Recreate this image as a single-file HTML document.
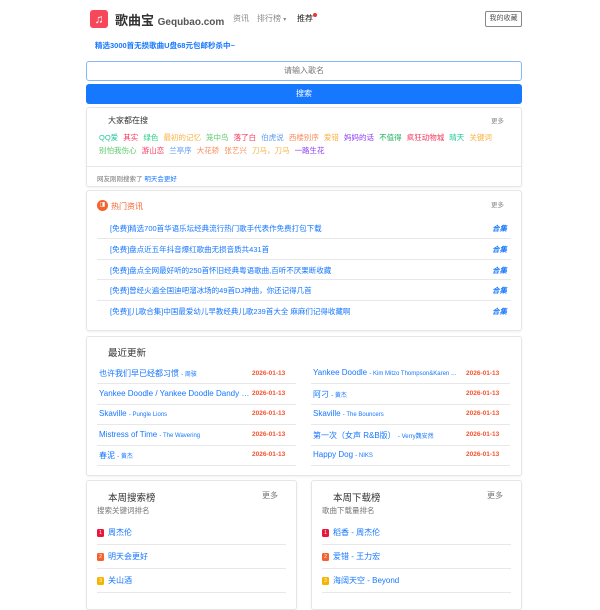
<!DOCTYPE html>
<html><head><meta charset="utf-8"><style>
*{margin:0;padding:0;box-sizing:border-box}
body{width:600px;height:600px;overflow:hidden;background:#fff;font-family:"Liberation Sans","Noto Sans CJK SC",sans-serif;position:relative}
.a{position:absolute;white-space:nowrap}
.card{position:absolute;border:1px solid #e6e6e6;border-radius:3px;background:#fff;box-shadow:0 1px 2px rgba(0,0,0,.06)}
.b{color:#1677ff}
.hr{position:absolute;height:1px;background:#e8e8e8}
.t{font-size:7.5px}
.date{color:#f5522d;font-size:6.5px;font-weight:bold}
.rk{display:inline-block;width:7px;height:8px;border-radius:1.5px;color:#fff;font-size:5px;text-align:center;line-height:8px;margin-right:4px;vertical-align:1px}
</style></head><body>
<div class="a" style="left:90px;top:10px;width:18px;height:18px;background:#f7475b;border-radius:3px;color:#fff;font-size:12px;text-align:center;line-height:18px">♫</div>
<div class="a" style="left:115px;top:10px;font-size:13px;color:#333;font-weight:bold">歌曲宝 <span style="font-size:10px;color:#555">Gequbao.com</span></div>
<div class="a" style="left:233px;top:13px;font-size:8px;color:#888">资讯</div>
<div class="a" style="left:257px;top:13px;font-size:8px;color:#888">排行榜 <span style="font-size:6px">▾</span></div>
<div class="a" style="left:297px;top:13px;font-size:8px;color:#222">推荐</div>
<div class="a" style="left:313px;top:13px;width:4px;height:4px;border-radius:50%;background:#e33"></div>
<div class="a" style="left:485px;top:11px;width:37px;height:16px;border:1px solid #888;border-radius:2px;font-size:7px;color:#555;text-align:center;line-height:14px">我的收藏</div>
<div class="a b" style="left:95px;top:40px;font-size:7.5px;font-weight:bold">精选3000首无损歌曲U盘68元包邮秒杀中~</div>
<div class="a" style="left:86px;top:61px;width:436px;height:20px;border:1px solid #86b7fe;border-radius:3px;font-size:8px;color:#777;text-align:center;line-height:18px">请输入歌名</div>
<div class="a" style="left:86px;top:84px;width:436px;height:20px;background:#1677ff;border-radius:3px;font-size:8px;color:#fff;text-align:center;line-height:20px">搜索</div>

<div class="card" style="left:86px;top:107px;width:436px;height:80px"></div>
<div class="a" style="left:108px;top:115px;font-size:8px;color:#333">大家都在搜</div>
<div class="a" style="left:491px;top:115px;font-size:6.5px;color:#888">更多</div>
<div class="a t" style="left:99px;top:132px;word-spacing:3px">
<span style="color:#20c997">QQ爱</span> <span style="color:#f5365c">其实</span> <span style="color:#2dce89">绿色</span> <span style="color:#fbb140">最初的记忆</span> <span style="color:#5bc96a">笼中鸟</span> <span style="color:#f5365c">落了白</span> <span style="color:#5e9cf5">伯虎说</span> <span style="color:#fb8c5a">西楼别序</span> <span style="color:#fbb140">爱错</span> <span style="color:#8b3cf5">妈妈的话</span> <span style="color:#20b060">不值得</span> <span style="color:#f5365c">疯狂动物城</span> <span style="color:#20c997">晴天</span> <span style="color:#fbb140">关键词</span></div>
<div class="a t" style="left:99px;top:145px;word-spacing:3px">
<span style="color:#5bc96a">别怕我伤心</span> <span style="color:#f5365c">游山恋</span> <span style="color:#5e9cf5">兰亭序</span> <span style="color:#fb8c5a">大花轿 张艺兴</span> <span style="color:#fbb140">刀马，刀马</span> <span style="color:#8b3cf5">一路生花</span></div>
<div class="hr" style="left:87px;top:166px;width:434px"></div>
<div class="a" style="left:97px;top:173px;font-size:6.5px;color:#777">网友刚刚搜索了 <span class="b">明天会更好</span></div>

<div class="card" style="left:86px;top:190px;width:436px;height:141px"></div>
<div class="a" style="left:97px;top:200px;width:11px;height:11px;border-radius:50%;background:#f5622d;color:#fff;font-size:6px;text-align:center;line-height:11px">◨</div>
<div class="a" style="left:111px;top:201px;font-size:8px;color:#f5622d">热门资讯</div>
<div class="a" style="left:491px;top:199px;font-size:6.5px;color:#888">更多</div>
<div class="a b t" style="left:110px;top:223px">[免费]精选700首华语乐坛经典流行热门歌手代表作免费打包下载</div>
<div class="a b t" style="left:110px;top:244px">[免费]盘点近五年抖音爆红歌曲无损音质共431首</div>
<div class="a b t" style="left:110px;top:265px">[免费]盘点全网最好听的250首怀旧经典粤语歌曲,百听不厌果断收藏</div>
<div class="a b t" style="left:110px;top:285px">[免费]曾经火遍全国迪吧溜冰场的49首DJ神曲，你还记得几首</div>
<div class="a b t" style="left:110px;top:306px">[免费][儿歌合集]中国最爱幼儿早教经典儿歌239首大全 麻麻们记得收藏啊</div>
<div class="a b t" style="left:492px;top:223px;font-weight:bold;font-style:italic">合集</div>
<div class="a b t" style="left:492px;top:244px;font-weight:bold;font-style:italic">合集</div>
<div class="a b t" style="left:492px;top:265px;font-weight:bold;font-style:italic">合集</div>
<div class="a b t" style="left:492px;top:285px;font-weight:bold;font-style:italic">合集</div>
<div class="a b t" style="left:492px;top:306px;font-weight:bold;font-style:italic">合集</div>
<div class="hr" style="left:97px;top:238px;width:414px"></div>
<div class="hr" style="left:97px;top:259px;width:414px"></div>
<div class="hr" style="left:97px;top:279px;width:414px"></div>
<div class="hr" style="left:97px;top:300px;width:414px"></div>

<div class="card" style="left:86px;top:336px;width:436px;height:140px"></div>
<div class="a" style="left:108px;top:345px;font-size:9.5px;color:#333">最近更新</div>
<div class="a b" style="left:99px;top:368px;font-size:8px">也许我们早已经都习惯 <span style="font-size:6px">- 周骇</span></div>
<div class="a b" style="left:99px;top:389px;font-size:8px">Yankee Doodle / Yankee Doodle Dandy …</div>
<div class="a b" style="left:99px;top:409px;font-size:8px">Skaville <span style="font-size:6px">- Pungle Lions</span></div>
<div class="a b" style="left:99px;top:430px;font-size:8px">Mistress of Time <span style="font-size:6px">- The Wavering</span></div>
<div class="a b" style="left:99px;top:450px;font-size:8px">春泥 <span style="font-size:6px">- 黄杰</span></div>
<div class="a b" style="left:313px;top:368px;font-size:8px">Yankee Doodle <span style="font-size:6px">- Kim Mitzo Thompson&amp;Karen …</span></div>
<div class="a b" style="left:313px;top:389px;font-size:8px">阿刁 <span style="font-size:6px">- 黄杰</span></div>
<div class="a b" style="left:313px;top:409px;font-size:8px">Skaville <span style="font-size:6px">- The Bouncers</span></div>
<div class="a b" style="left:313px;top:430px;font-size:8px">第一次（女声 R&amp;B版） <span style="font-size:6px">- Verry魏安然</span></div>
<div class="a b" style="left:313px;top:450px;font-size:8px">Happy Dog <span style="font-size:6px">- NIKS</span></div>
<div class="a date" style="left:252px;top:370px">2026-01-13</div>
<div class="a date" style="left:252px;top:390px">2026-01-13</div>
<div class="a date" style="left:252px;top:410px">2026-01-13</div>
<div class="a date" style="left:252px;top:431px">2026-01-13</div>
<div class="a date" style="left:252px;top:451px">2026-01-13</div>
<div class="a date" style="left:466px;top:370px">2026-01-13</div>
<div class="a date" style="left:466px;top:390px">2026-01-13</div>
<div class="a date" style="left:466px;top:410px">2026-01-13</div>
<div class="a date" style="left:466px;top:431px">2026-01-13</div>
<div class="a date" style="left:466px;top:451px">2026-01-13</div>
<div class="hr" style="left:97px;top:383px;width:199px"></div>
<div class="hr" style="left:97px;top:404px;width:199px"></div>
<div class="hr" style="left:97px;top:424px;width:199px"></div>
<div class="hr" style="left:97px;top:445px;width:199px"></div>
<div class="hr" style="left:97px;top:465px;width:199px"></div>
<div class="hr" style="left:311px;top:383px;width:199px"></div>
<div class="hr" style="left:311px;top:404px;width:199px"></div>
<div class="hr" style="left:311px;top:424px;width:199px"></div>
<div class="hr" style="left:311px;top:445px;width:199px"></div>
<div class="hr" style="left:311px;top:465px;width:199px"></div>

<div class="card" style="left:86px;top:480px;width:211px;height:130px"></div>
<div class="card" style="left:311px;top:480px;width:211px;height:130px"></div>
<div class="a" style="left:108px;top:490px;font-size:9.5px;color:#333">本周搜索榜</div>
<div class="a" style="left:262px;top:490px;font-size:8px;color:#777">更多</div>
<div class="a" style="left:97px;top:505px;font-size:7.5px;color:#777">搜索关键词排名</div>
<div class="a" style="left:333px;top:490px;font-size:9.5px;color:#333">本周下载榜</div>
<div class="a" style="left:487px;top:490px;font-size:8px;color:#777">更多</div>
<div class="a" style="left:322px;top:505px;font-size:7.5px;color:#777">歌曲下载量排名</div>
<div class="a b" style="left:97px;top:527px;font-size:8px"><span class="rk" style="background:#e8173b">1</span>周杰伦</div>
<div class="a b" style="left:97px;top:551px;font-size:8px"><span class="rk" style="background:#f5622d">2</span>明天会更好</div>
<div class="a b" style="left:97px;top:575px;font-size:8px"><span class="rk" style="background:#f5b400">3</span>关山酒</div>
<div class="a b" style="left:322px;top:527px;font-size:8px"><span class="rk" style="background:#e8173b">1</span>稻香 - 周杰伦</div>
<div class="a b" style="left:322px;top:551px;font-size:8px"><span class="rk" style="background:#f5622d">2</span>爱错 - 王力宏</div>
<div class="a b" style="left:322px;top:575px;font-size:8px"><span class="rk" style="background:#f5b400">3</span>海阔天空 - Beyond</div>
<div class="hr" style="left:97px;top:544px;width:189px"></div>
<div class="hr" style="left:97px;top:568px;width:189px"></div>
<div class="hr" style="left:97px;top:592px;width:189px"></div>
<div class="hr" style="left:322px;top:544px;width:189px"></div>
<div class="hr" style="left:322px;top:568px;width:189px"></div>
<div class="hr" style="left:322px;top:592px;width:189px"></div>
</body></html>
